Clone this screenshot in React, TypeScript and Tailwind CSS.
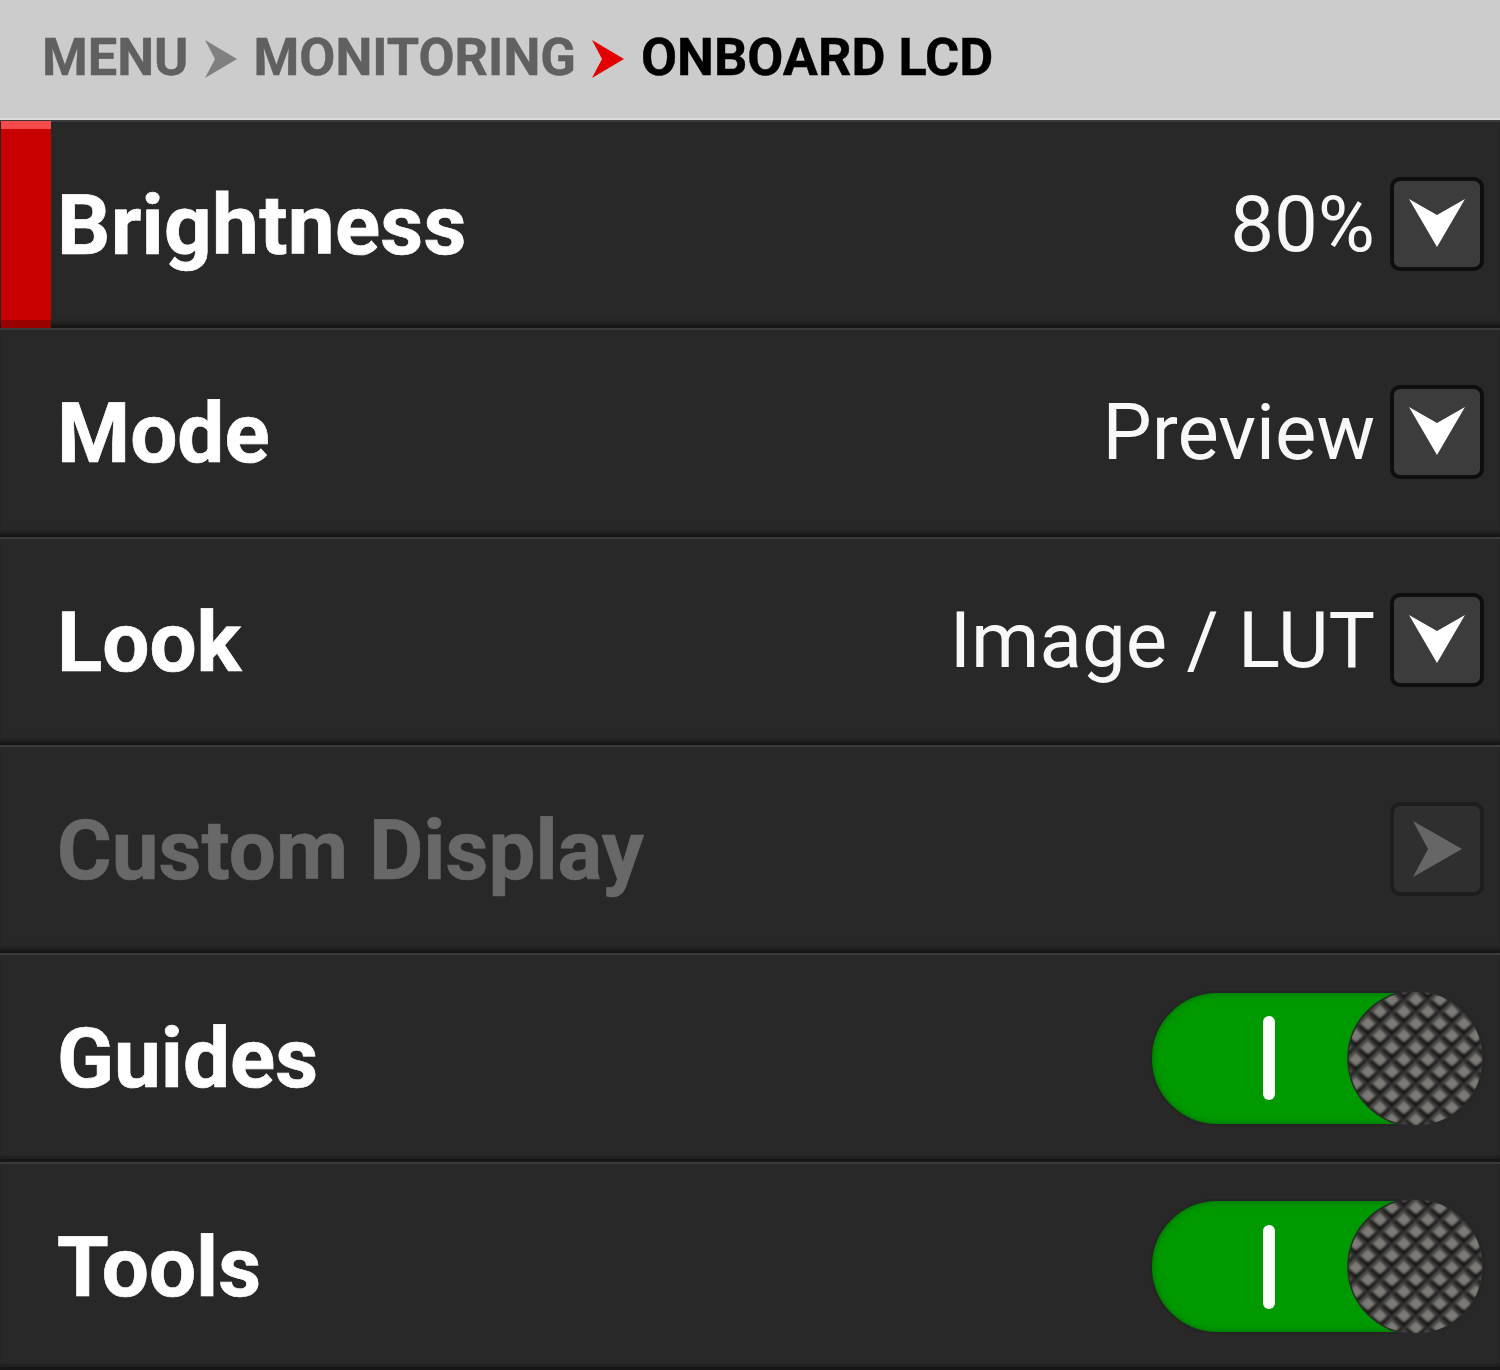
import { useId } from 'react';

const rowClass =
  "flex h-[208.33px] items-center justify-between border-b-[3px] border-b-[#161616] pl-[56px] pr-[16px] pt-[2px] shadow-[inset_0_2px_0_#3a3a3a,inset_0_-5px_4px_-3px_#1c1c1c]";

function Crumb({ color }: { color: string }) {
  return (
    <svg width="34" height="40" viewBox="0 0 34 40" className="mt-[2px] shrink-0">
      <polygon points="1,1 33,20 1,39 11,20" fill={color} />
    </svg>
  );
}

function DropButton() {
  return (
    <div className="h-[94px] w-[94px] shrink-0 rounded-[10px] border-[4px] border-[#0e0e0e] bg-[#3c3c3c]">
      <svg width="86" height="86" viewBox="0 0 86 86">
        <polygon points="15,18 43,34 71,18 43,66" fill="#ffffff" />
      </svg>
    </div>
  );
}

function NextButton() {
  return (
    <div className="h-[94px] w-[94px] shrink-0 rounded-[10px] border-[4px] border-[#1e1e1e] bg-[#2f2f2f]">
      <svg width="86" height="86" viewBox="0 0 86 86">
        <polygon points="19,15 68,43 19,71 34,43" fill="#666666" />
      </svg>
    </div>
  );
}

function Knob() {
  const id = useId();
  const centers = [[12, 12], [0, 0], [24, 0], [0, 24], [24, 24]];
  return (
    <svg width="137" height="137" viewBox="0 0 137 137" className="absolute right-[-1px] top-[-3px]">
      <defs>
        <filter id={`${id}b`} x="-10%" y="-10%" width="120%" height="120%">
          <feGaussianBlur stdDeviation="0.8" />
        </filter>
        <pattern id={id} width="24" height="24" patternUnits="userSpaceOnUse" x="9" y="-2">
          <rect width="24" height="24" fill="#1a1a1a" />
          <g filter={`url(#${id}b)`}>
            {centers.map(([x, y], i) => (
              <g key={i}>
                <polygon points={`${x - 12},${y} ${x},${y - 12} ${x},${y}`} fill="#4c4a46" />
                <polygon points={`${x},${y - 12} ${x + 12},${y} ${x},${y}`} fill="#3c3a38" />
                <polygon points={`${x - 12},${y} ${x},${y + 7} ${x},${y}`} fill="#222222" />
                <polygon points={`${x + 12},${y} ${x},${y + 7} ${x},${y}`} fill="#1c1c1c" />
                <polygon points={`${x - 7},${y} ${x},${y - 7} ${x + 7},${y} ${x},${y + 6}`} fill="#7d7a76" />
              </g>
            ))}
          </g>
        </pattern>
      </defs>
      <circle cx="68.5" cy="68.5" r="67.5" fill={`url(#${id})`} stroke="#2a2a2a" strokeWidth="1.5" />
    </svg>
  );
}

function Toggle() {
  return (
    <div className="relative mr-[-1px] mt-[3px] flex h-[135px] w-[335px] shrink-0 items-center rounded-full border-[2px] border-[#242424] bg-[#009900] pl-[111px] shadow-[inset_0_0_6px_#006600]">
      <div className="h-[84px] w-[12px] rounded-full bg-white" />
      <Knob />
    </div>
  );
}

const labelBase = "mt-[4px] pl-[1px] text-[83.6px] font-bold leading-none [-webkit-text-stroke:0.7px_currentColor]";
const labelClass = labelBase + " text-white";
const valueClass = "mt-[2px] text-[78px] font-normal leading-none text-[#f8f8f8]";

export default function App() {
  return (
    <div className="h-[1370px] w-[1500px] overflow-hidden bg-[#282828] font-['Roboto',sans-serif]">
      <div className="flex h-[120px] items-center gap-[15.5px] border-b-[2px] border-b-[#dddddd] bg-[#cccccc] pb-[3px] pl-[42px] text-[52.3px] font-bold leading-none [-webkit-text-stroke:0.4px_currentColor]">
        <span className="text-[#606060]">MENU</span>
        <Crumb color="#808080" />
        <span className="text-[#606060]">MONITORING</span>
        <Crumb color="#e20000" />
        <span className="text-black">ONBOARD LCD</span>
      </div>

      <div className="relative">
        <div className="absolute left-[1px] top-[1px] h-[207px] w-[50px] bg-[#c80000]">
          <div className="h-[8px] bg-[#f54a4a]" />
          <div className="absolute bottom-0 left-0 right-0 h-[8px] bg-[#990000]" />
        </div>
        <div className={rowClass}>
          <span className={labelClass + " tracking-[0.3px]"}>Brightness</span>
          <div className="flex items-center gap-[15px]">
            <span className={valueClass}>80%</span>
            <DropButton />
          </div>
        </div>
      </div>
      <div className={rowClass}>
        <span className={labelClass}>Mode</span>
        <div className="flex items-center gap-[15px]">
          <span className={valueClass}>Preview</span>
          <DropButton />
        </div>
      </div>
      <div className={rowClass}>
        <span className={labelClass}>Look</span>
        <div className="flex items-center gap-[15px]">
          <span className={valueClass}>Image / LUT</span>
          <DropButton />
        </div>
      </div>
      <div className={rowClass}>
        <span className={labelBase + " text-[#686868]"}>Custom Display</span>
        <NextButton />
      </div>
      <div className={rowClass}>
        <span className={labelClass}>Guides</span>
        <Toggle />
      </div>
      <div className={rowClass}>
        <span className={labelClass}>Tools</span>
        <Toggle />
      </div>
    </div>
  );
}
